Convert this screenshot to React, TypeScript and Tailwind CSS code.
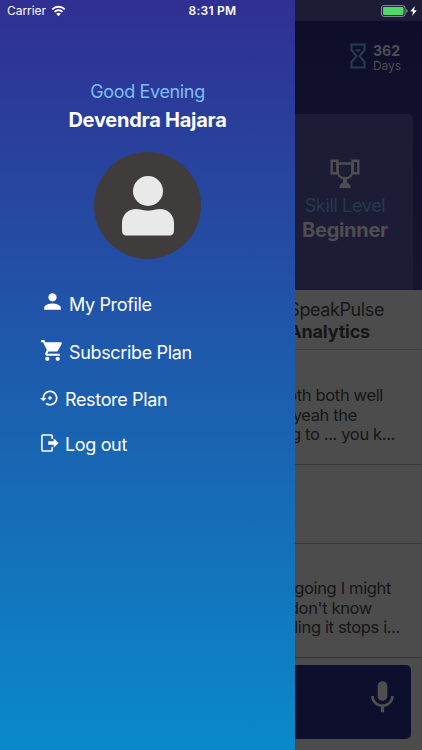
import { MdMic, MdPerson, MdSettingsBackupRestore, MdShoppingCart } from "react-icons/md";

function WifiIcon() {
  return (
    <svg width="15" height="12" viewBox="0 0 16 12" fill="none" stroke="#fff" strokeWidth="2">
      <path d="M1.3 4.2a9.7 9.7 0 0 1 13.4 0" />
      <path d="M3.8 6.9a6.1 6.1 0 0 1 8.4 0" />
      <path d="M8 11.6 5.5 9a3.6 3.6 0 0 1 5 0z" fill="#fff" stroke="none" />
    </svg>
  );
}

function BatteryIcon() {
  return (
    <svg width="37" height="12" viewBox="0 0 37 12">
      <rect x=".5" y=".6" width="23.6" height="10.8" rx="2.4" fill="none" stroke="#8e8e9c" />
      <rect x="2" y="2.1" width="20.6" height="7.8" rx="1.1" fill="#4cd964" />
      <path d="M25.2 4.2c1 .3 1.5 1 1.5 1.8s-.5 1.5-1.5 1.8z" fill="#8e8e9c" />
      <path d="m33.8 1-4.5 5.6h2.8L31.2 11l4.6-5.7H33z" fill="#fff" />
    </svg>
  );
}

function LogoutIcon() {
  return (
    <svg width="18" height="18" viewBox="0 0 18 18" fill="none" stroke="#fff" strokeWidth="1.6">
      <path d="M11.2 5V2a1 1 0 0 0-1-1H1.9a1 1 0 0 0-1 1v14a1 1 0 0 0 1 1h8.3a1 1 0 0 0 1-1v-3" />
      <path d="M7.2 7.2h5.5V4.2L17.6 9l-4.9 4.8v-3H7.200z" fill="#fff" stroke="none" />
    </svg>
  );
}

function HourglassIcon() {
  return (
    <svg width="16" height="26" viewBox="0 0 16 26" fill="none" stroke="#253f50" strokeWidth="2">
      <path d="M1.5 1.5h13v5.3L9.5 13l5 6.2v5.3h-13v-5.3l5-6.2-5-6.2z" />
      <path d="M4.8 6.2h6.4L8 9.6z" fill="#253f50" stroke="none" />
    </svg>
  );
}

function TrophyIcon() {
  return (
    <svg width="30" height="30" viewBox="0 0 30 30" fill="none" stroke="#4e4e50" strokeWidth="2.4">
      <path d="M7.5 4.5h15V12c0 4.4-3.2 7.2-7.5 7.2S7.5 16.4 7.5 12z" />
      <path d="M7.5 1.8H1.7v12.4h6M22.500 1.800h5.800v12.400h-6M7.500.600v13.600M22.500.600v13.600" />
      <path d="M13 19h4v4.700c2.200.5 3.700 2.200 3.700 5.200H9.300c0-3 1.500-4.700 3.700-5.200z" fill="#4e4e50" stroke="none" />
    </svg>
  );
}

function Avatar() {
  return (
    <div className="flex size-[107px] items-center justify-center rounded-full bg-[#403c3b]">
      <svg width="54" height="62" viewBox="0 0 54 62" fill="#e9e9e9">
        <circle cx="27" cy="16" r="15" />
        <path d="M15 34c1.5 0 3 .2 4.2.6 5 1.5 10.5 1.5 15.6 0 1.200-.4 2.700-.6 4.200-.6 8 0 14 6 14 14v7.500c0 3-1.500 5-5 5H6c-3.500 0-5-2-5-5V48c0-8 6-14 14-14z" />
      </svg>
    </div>
  );
}

const menu = [
  { label: "My Profile", icon: <MdPerson size={25} />, row: "h-[49px] gap-[4px] pl-[40px]", iconBox: "pb-[6px]" },
  { label: "Subscribe Plan", icon: <MdShoppingCart size={25} />, row: "h-[48px] gap-[4px] pl-[40px]", iconBox: "pb-[5px]" },
  { label: "Restore Plan", icon: <MdSettingsBackupRestore size={20} />, row: "h-[45px] gap-[5px] pl-[40px]", iconBox: "pb-[3px]" },
  { label: "Log out", icon: <LogoutIcon />, row: "h-[45px] gap-[6px] pl-[41px]", iconBox: "pb-[3px]" },
];

const firstEntry = [
  { text: "oth both well", width: "w-[88px]" },
  { text: "yeah the", width: "w-[62px]" },
  { text: "g to ... you k...", width: "w-[100px]" },
];
const secondEntry = [
  { text: "going I might", width: "w-[96px]" },
  { text: "don't know", width: "w-[77px]" },
  { text: "ding it stops i...", width: "w-[105px]" },
];

function Lines({ lines }: { lines: { text: string; width: string }[] }) {
  return (
    <div className="text-[16.5px] leading-[19.5px] tracking-[-0.35px] text-[#161616]">
      {lines.map((l) => (
        <p key={l.text} className={`flex justify-end whitespace-nowrap ${l.width}`}>{l.text}</p>
      ))}
    </div>
  );
}

export default function App() {
  return (
    <div className="relative flex h-[750px] w-[422px] overflow-hidden font-['Inter','Liberation_Sans',sans-serif]">
      {/* Status bar */}
      <header className="absolute inset-x-0 top-0 z-10 grid h-[21px] grid-cols-3 items-center pl-[7px] pr-[4px] text-[12px] text-white">
        <div className="flex items-center gap-[5px]">
          <span className="tracking-[-0.05px]">Carrier</span>
          <WifiIcon />
        </div>
        <span className="text-center font-semibold tracking-[0.25px]">8:31 PM</span>
        <div className="flex justify-end"><BatteryIcon /></div>
      </header>

      {/* Drawer */}
      <aside className="flex w-[295px] shrink-0 flex-col bg-linear-to-b/srgb from-[#302f92] to-[#0a89c8] pt-[78px] text-white">
        <div className="flex flex-col items-center">
          <p className="text-[18px] leading-[28px] tracking-[-0.35px] text-[#7dbdf5]">Good Evening</p>
          <h1 className="mb-[17px] text-[20px] font-bold leading-[29px] tracking-[-0.25px]">Devendra Hajara</h1>
          <Avatar />
        </div>
        <nav className="mt-[21px] flex flex-col">
          {menu.map((m) => (
            <a key={m.label} className={`flex items-center ${m.row}`}>
              <span className={m.iconBox}>{m.icon}</span>
              <span className="text-[18px] leading-[24px] tracking-[-0.35px]">{m.label}</span>
            </a>
          ))}
        </nav>
      </aside>

      {/* Dimmed page */}
      <main className="flex min-w-0 flex-1 flex-col overflow-hidden bg-[#4c4c4c]">
        <div className="h-[21px] bg-[#1c1c36]" />
        <section className="flex h-[269px] flex-col bg-linear-to-b from-[#0e0e2b] to-[#15152f]">
          <div className="flex h-[93px] items-start gap-[7px] pl-[55px] pt-[22px] text-[#4e4e50]">
            <HourglassIcon />
            <div>
              <p className="text-[14px] font-bold leading-[16px]">362</p>
              <p className="text-[12px] leading-[14px] tracking-[-0.1px]">Days</p>
            </div>
          </div>
          <div className="mr-[9px] flex flex-1 flex-col items-center rounded-tr-[5px] bg-[#1c1c37] pr-[18px] pt-[45px]">
            <TrophyIcon />
            <p className="mt-[5px] text-[18px] leading-[24px] tracking-[-0.35px] text-[#253a4d]">Skill Level</p>
            <p className="text-[20px] font-bold leading-[24px] tracking-[-0.3px] text-[#4e4e50]">Beginner</p>
          </div>
        </section>
        <section className="h-[60px] border-b border-[#404040] pt-[9px] text-[18px] leading-[22px] text-[#161616]">
          <p className="flex w-[89px] justify-end tracking-[-0.4px]">SpeakPulse</p>
          <p className="flex w-[75px] justify-end font-bold tracking-[-0.2px]">Analytics</p>
        </section>
        <section className="h-[115px] border-b border-[#393939] pt-[36px]">
          <Lines lines={firstEntry} />
        </section>
        <section className="h-[79px] border-b border-[#393939]" />
        <section className="h-[114px] border-b border-[#393939] pt-[35px]">
          <Lines lines={secondEntry} />
        </section>
        <div className="mr-[11px] mt-[7px] flex h-[74px] items-center justify-end rounded-r-[5px] bg-[#0e0e2d] pb-[10px] pr-[9px] text-[#4e4e50]">
          <MdMic size={39} />
        </div>
      </main>
    </div>
  );
}
